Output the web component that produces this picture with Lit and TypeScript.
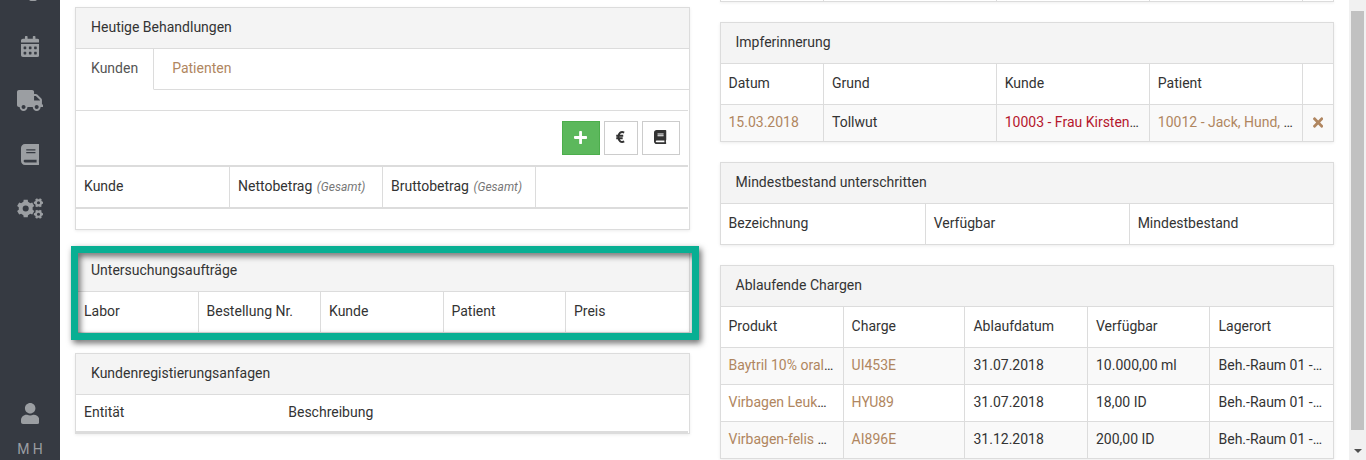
import { LitElement, html, css, svg, nothing } from "lit";
import { customElement, property } from "lit/decorators.js";
import { classMap } from "lit/directives/class-map.js";

/** Outline of a gear with a round hole, as an even-odd path. */
function gear(cx: number, cy: number, r: number, inner: number, hole: number, teeth: number, turn = 0): string {
  const pts: string[] = [];
  const step = (Math.PI * 2) / teeth;
  for (let i = 0; i < teeth; i++) {
    const a = i * step + turn;
    for (const [f, rad] of [[-0.32, inner], [-0.22, r], [0.22, r], [0.32, inner]]) {
      const t = a + f * step;
      pts.push(`${(cx + Math.cos(t) * rad).toFixed(1)} ${(cy + Math.sin(t) * rad).toFixed(1)}`);
    }
  }
  return `M${pts.join("L")}ZM${cx - hole} ${cy}a${hole} ${hole} 0 1 0 ${hole * 2} 0a${hole} ${hole} 0 1 0 ${-hole * 2} 0Z`;
}

const dot = "c0-6.6 5.4-12 12-12h40c6.6 0 12 5.4 12 12v40c0 6.6-5.4 12-12 12h-40c-6.6 0-12-5.4-12-12v-40z";

const ICONS: Record<string, { w: number; d: string }> = {
  calendar: {
    w: 448,
    d: `M0 464c0 26.5 21.5 48 48 48h352c26.5 0 48-21.5 48-48V192H0v272zM320 268${dot}M320 396${dot}M192 268${dot}M192 396${dot}M64 268${dot}M64 396${dot}M400 64h-48V16c0-8.8-7.2-16-16-16h-32c-8.8 0-16 7.2-16 16v48H160V16c0-8.8-7.2-16-16-16h-32c-8.8 0-16 7.2-16 16v48H48C21.5 64 0 85.5 0 112v48h448v-48c0-26.5-21.5-48-48-48z`,
  },
  truck: {
    w: 640,
    d: "M624 352h-16V243.9c0-12.7-5.1-24.9-14.1-33.9L494 110.1c-9-9-21.2-14.1-33.9-14.1H416V48c0-26.5-21.5-48-48-48H48C21.5 0 0 21.5 0 48v320c0 26.5 21.5 48 48 48h16c0 53 43 96 96 96s96-43 96-96h128c0 53 43 96 96 96s96-43 96-96h48c8.8 0 16-7.2 16-16v-32c0-8.8-7.2-16-16-16zM160 464c-26.5 0-48-21.5-48-48s21.5-48 48-48 48 21.5 48 48-21.5 48-48 48zm320 0c-26.5 0-48-21.5-48-48s21.5-48 48-48 48 21.5 48 48-21.5 48-48 48zm80-208H416V144h44.1l99.9 99.9V256z",
  },
  book: {
    w: 448,
    d: "M448 360V24c0-13.3-10.7-24-24-24H96C43 0 0 43 0 96v320c0 53 43 96 96 96h328c13.3 0 24-10.7 24-24v-16c0-7.5-3.5-14.3-8.9-18.7-4.2-15.4-4.2-59.3 0-74.7 5.4-4.3 8.9-11.1 8.9-18.6zM128 134c0-3.3 2.7-6 6-6h212c3.3 0 6 2.7 6 6v20c0 3.3-2.7 6-6 6H134c-3.3 0-6-2.7-6-6v-20zm0 64c0-3.3 2.7-6 6-6h212c3.3 0 6 2.7 6 6v20c0 3.3-2.7 6-6 6H134c-3.3 0-6-2.7-6-6v-20zm253.4 250H96c-17.7 0-32-14.3-32-32 0-17.6 14.4-32 32-32h285.4c-1.9 17.1-1.9 46.9 0 64z",
  },
  cogs: {
    w: 640,
    d: gear(212, 256, 218, 172, 74, 6, Math.PI / 6) + gear(524, 116, 116, 90, 38, 6) + gear(524, 396, 116, 90, 38, 6),
  },
  user: {
    w: 448,
    d: "M224 256c70.7 0 128-57.3 128-128S294.7 0 224 0 96 57.3 96 128s57.3 128 128 128zm89.6 32h-16.7c-22.2 10.2-46.9 16-72.9 16s-50.6-5.8-72.9-16h-16.7C60.2 288 0 348.2 0 422.4V464c0 26.5 21.5 48 48 48h352c26.5 0 48-21.5 48-48v-41.6c0-74.2-60.2-134.4-134.4-134.4z",
  },
  plus: {
    w: 448,
    d: "M416 208H272V64c0-17.67-14.33-32-32-32h-32c-17.67 0-32 14.33-32 32v144H32c-17.67 0-32 14.33-32 32v32c0 17.67 14.33 32 32 32h144v144c0 17.67 14.33 32 32 32h32c17.67 0 32-14.33 32-32V304h144c17.67 0 32-14.33 32-32v-32c0-17.67-14.33-32-32-32z",
  },
  times: {
    w: 352,
    d: "M242.72 256l100.07-100.07c12.28-12.28 12.28-32.19 0-44.48l-22.24-22.24c-12.28-12.28-32.19-12.28-44.48 0L176 189.28 75.93 89.21c-12.28-12.28-32.19-12.28-44.48 0L9.21 111.45c-12.28 12.28-12.28 32.19 0 44.48L109.28 256 9.21 356.07c-12.28 12.28-12.28 32.19 0 44.48l22.24 22.24c12.28 12.28 32.2 12.28 44.48 0L176 322.72l100.07 100.07c12.28 12.28 32.2 12.28 44.48 0l22.24-22.24c12.28-12.28 12.28-32.19 0-44.48L242.72 256z",
  },
};

@customElement("ui-icon")
class UiIcon extends LitElement {
  @property() name = "";
  @property({ type: Number }) size = 14;
  static styles = css`
    :host { display: inline-flex; }
    svg { display: block; fill: currentColor; fill-rule: evenodd; }
    .line { fill: none; stroke: currentColor; stroke-width: 72; }
  `;
  render() {
    if (this.name === "euro") {
      return html`<svg viewBox="0 0 320 512" height=${this.size} width=${(this.size * 320) / 512} aria-hidden="true">
        ${svg`<path class="line" d="M300 94C180 30 88 130 88 256s92 226 212 162M8 212h256M8 300h236"/>`}
      </svg>`;
    }
    const icon = ICONS[this.name];
    return html`<svg viewBox="0 0 ${icon.w} 512" height=${this.size} width=${(this.size * icon.w) / 512} aria-hidden="true">
      ${svg`<path d=${icon.d}/>`}
    </svg>`;
  }
}

type Cell = string | { link: string; more?: boolean; red?: boolean } | { icon: string } | { label: string; note: string };

@customElement("data-grid")
class DataGrid extends LitElement {
  @property({ attribute: false }) columns: Cell[] = [];
  @property({ attribute: false }) widths: number[] = [];
  @property({ attribute: false }) rows: Cell[][] = [];
  @property({ type: Boolean }) ruled = false;
  @property({ type: Boolean }) compact = false;
  static styles = css`
    :host { display: block; }
    table { width: 100%; table-layout: fixed; border-collapse: separate; border-spacing: 0; }
    th, td {
      box-sizing: border-box; padding: 7px 8px 9px; line-height: 20px; font-weight: 400; text-align: left;
      white-space: nowrap; overflow: hidden; text-overflow: ellipsis;
      border-right: 1px solid #dcdcdc;
    }
    th { height: 40px; }
    td { height: 37px; border-top: 1px solid #dcdcdc; }
    th:last-child, td:last-child { border-right: 0; }
    tbody tr:nth-child(odd) td { background: #f9f9f9; }
    .ruled th { height: 44px; border-top: 2px solid #dcdcdc; border-bottom: 2px solid #dcdcdc; }
    .compact th { height: 38px; border-right: 0; border-bottom: 2px solid #dcdcdc; }
    a { color: #b08660; text-decoration: none; }
    a.red { color: #b5172d; }
    button { display: flex; border: 0; padding: 0 2px; background: none; color: #b08660; cursor: pointer; }
    .note { margin-left: 1px; font-size: 12px; font-style: italic; color: #777; }
  `;
  cell(c: Cell) {
    if (typeof c === "string") return c;
    if ("link" in c) return html`<a href="#" class=${classMap({ red: !!c.red })}>${c.link}</a>${c.more ? "…" : nothing}`;
    if ("icon" in c) return html`<button aria-label="Entfernen"><ui-icon name=${c.icon} size="15"></ui-icon></button>`;
    return html`${c.label} <span class="note">${c.note}</span>`;
  }
  render() {
    return html`<table class=${classMap({ ruled: this.ruled, compact: this.compact })}>
      <colgroup>${this.widths.map((w) => html`<col style="width:${w}%">`)}</colgroup>
      <thead><tr>${this.columns.map((c) => html`<th scope="col">${this.cell(c)}</th>`)}</tr></thead>
      <tbody>${this.rows.map((r) => html`<tr>${r.map((c) => html`<td>${this.cell(c)}</td>`)}</tr>`)}</tbody>
    </table>`;
  }
}

const REMINDER_WIDTHS = [16.9, 28.2, 25, 25, 4.9];

@customElement("app-root")
class AppRoot extends LitElement {
  static styles = css`
    :host {
      display: grid; grid-template-columns: 60px minmax(0, 1fr) 17px; height: 100vh; overflow: hidden;
      background: #fff; color: #333; font: 14px/20px Roboto, sans-serif;
    }
    .sidebar { display: flex; flex-direction: column; align-items: center; background: #363a42; color: #9b9ea2; overflow: hidden; }
    .sidebar a { display: flex; align-items: center; justify-content: center; width: 100%; height: 54px; color: inherit; }
    .sidebar a.clipped { height: 19px; align-items: flex-start; }
    .clipped svg { display: block; fill: currentColor; }
    .account { margin-top: auto; display: flex; flex-direction: column; align-items: center; gap: 15px; padding-bottom: 1px; }
    .sidebar .account a { height: 21px; }
    main { display: grid; grid-template-columns: minmax(0, 1fr) minmax(0, 1fr); gap: 30px; align-items: start; padding: 0 15px; overflow: hidden; }
    .column { display: flex; flex-direction: column; gap: 20px; }
    .first { padding-top: 7px; }
    .panel { position: relative; border: 1px solid #dcdcdc; background: #fff; box-shadow: 0 1px 3px rgba(0, 0, 0, 0.08); }
    h2 { margin: 0; padding: 9px 15px 11px; font-size: 14px; font-weight: 400; line-height: 20px; background: #f4f4f4; border-bottom: 1px solid #dcdcdc; }
    .tail { border-top: 0; display: grid; grid-template-columns: 16.9fr 28.2fr 25fr 25fr 4.9fr; }
    .tail span { height: 1px; border-right: 1px solid #dcdcdc; }
    .tail span:last-child { border-right: 0; }
    .tabs { display: flex; }
    .tabs button { font: inherit; margin: 0; padding: 9px 15px 11px; border: 0; border-bottom: 1px solid #dcdcdc; background: none; color: #b08660; cursor: pointer; }
    .tabs button.active { color: #555; border-bottom-color: transparent; border-right: 1px solid #dcdcdc; }
    .tabs button.next { padding-left: 18px; }
    .tabs .rest { flex: 1; border-bottom: 1px solid #dcdcdc; }
    .listing { margin: 20px 1px 20px 0; border-top: 1px solid #dcdcdc; }
    .tools { display: flex; justify-content: flex-end; gap: 4px; padding: 10px 8px; }
    .tools button { box-sizing: border-box; display: flex; align-items: center; justify-content: center; width: 38px; height: 34px; margin: 0; padding: 0 0 2px; border: 1px solid #ccc; background: #fff; color: #333; cursor: pointer; }
    .tools button.add { background: #5cb85c; border-color: #4cae4c; color: #fff; }
    .tools button.narrow { width: 34px; }
    .inset { margin-right: 1px; }
    .marker { position: absolute; inset: -5px -10px -8px -5px; border: 7px solid #08af93; filter: drop-shadow(2px 3px 3px rgba(0, 0, 0, 0.6)); pointer-events: none; }
    .scroll { display: flex; flex-direction: column; padding: 11px 2px 0; background: #f1f1f1; }
    .thumb { flex: 1; background: #c1c1c1; }
    .down { display: flex; justify-content: center; align-items: center; height: 30px; padding-top: 11px; box-sizing: border-box; }
    .down svg { display: block; fill: #505050; }
  `;
  render() {
    return html`
      <nav class="sidebar" aria-label="Hauptmenü">
        <a class="clipped" href="#" aria-label="Start"><svg width="26" height="2" viewBox="0 0 26 2"><path d="M12 0h8c-1 1-2 1-4 1s-3 0-4-1z"/></svg></a>
        <a href="#" aria-label="Kalender"><ui-icon name="calendar" size="21"></ui-icon></a>
        <a href="#" aria-label="Lieferung"><ui-icon name="truck" size="21"></ui-icon></a>
        <a href="#" aria-label="Buch"><ui-icon name="book" size="21"></ui-icon></a>
        <a href="#" aria-label="Einstellungen"><ui-icon name="cogs" size="21"></ui-icon></a>
        <div class="account">
          <a href="#" aria-label="Benutzer"><ui-icon name="user" size="21"></ui-icon></a>
          <span>M H</span>
        </div>
      </nav>
      <main>
        <div class="column first">
          <section class="panel">
            <h2>Heutige Behandlungen</h2>
            <div class="tabs" role="tablist">
              <button class="active" role="tab" aria-selected="true">Kunden</button>
              <button class="next" role="tab" aria-selected="false">Patienten</button>
              <span class="rest"></span>
            </div>
            <div class="listing">
              <div class="tools">
                <button class="add" aria-label="Neu"><ui-icon name="plus" size="15"></ui-icon></button>
                <button class="narrow" aria-label="Euro"><ui-icon name="euro" size="14"></ui-icon></button>
                <button aria-label="Buch"><ui-icon name="book" size="14"></ui-icon></button>
              </div>
              <data-grid ruled .widths=${[25.2, 25, 25, 24.8]}
                .columns=${["Kunde", { label: "Nettobetrag", note: "(Gesamt)" }, { label: "Bruttobetrag", note: "(Gesamt)" }, ""]}></data-grid>
            </div>
          </section>
          <section class="panel">
            <h2>Untersuchungsaufträge</h2>
            <data-grid .widths=${[20, 20, 20, 20, 20]} .columns=${["Labor", "Bestellung Nr.", "Kunde", "Patient", "Preis"]}></data-grid>
            <div class="marker"></div>
          </section>
          <section class="panel">
            <h2>Kundenregistierungsanfagen</h2>
            <data-grid class="inset" compact .widths=${[33.4, 33.3, 33.3]} .columns=${["Entität", "Beschreibung", ""]}></data-grid>
          </section>
        </div>
        <div class="column">
          <div class="panel tail" aria-hidden="true"><span></span><span></span><span></span><span></span><span></span></div>
          <section class="panel">
            <h2>Impferinnerung</h2>
            <data-grid .widths=${REMINDER_WIDTHS} .columns=${["Datum", "Grund", "Kunde", "Patient", ""]}
              .rows=${[[{ link: "15.03.2018" }, "Tollwut", { link: "10003 - Frau Kirsten", more: true, red: true }, { link: "10012 - Jack, Hund, ", more: true }, { icon: "times" }]]}></data-grid>
          </section>
          <section class="panel">
            <h2>Mindestbestand unterschritten</h2>
            <data-grid .widths=${[33.5, 33.3, 33.2]} .columns=${["Bezeichnung", "Verfügbar", "Mindestbestand"]}></data-grid>
          </section>
          <section class="panel">
            <h2>Ablaufende Chargen</h2>
            <data-grid .widths=${[20.1, 19.9, 20, 20, 20]} .columns=${["Produkt", "Charge", "Ablaufdatum", "Verfügbar", "Lagerort"]}
              .rows=${[
                [{ link: "Baytril 10% oral", more: true }, { link: "UI453E" }, "31.07.2018", "10.000,00 ml", "Beh.-Raum 01 -…"],
                [{ link: "Virbagen Leuk", more: true }, { link: "HYU89" }, "31.07.2018", "18,00 ID", "Beh.-Raum 01 -…"],
                [{ link: "Virbagen-felis ", more: true }, { link: "AI896E" }, "31.12.2018", "200,00 ID", "Beh.-Raum 01 -…"],
              ]}></data-grid>
          </section>
        </div>
      </main>
      <div class="scroll" aria-hidden="true">
        <div class="thumb"></div>
        <div class="down"><svg width="8" height="4" viewBox="0 0 8 4"><path d="M0 0h8L4 4z"/></svg></div>
      </div>
    `;
  }
}
